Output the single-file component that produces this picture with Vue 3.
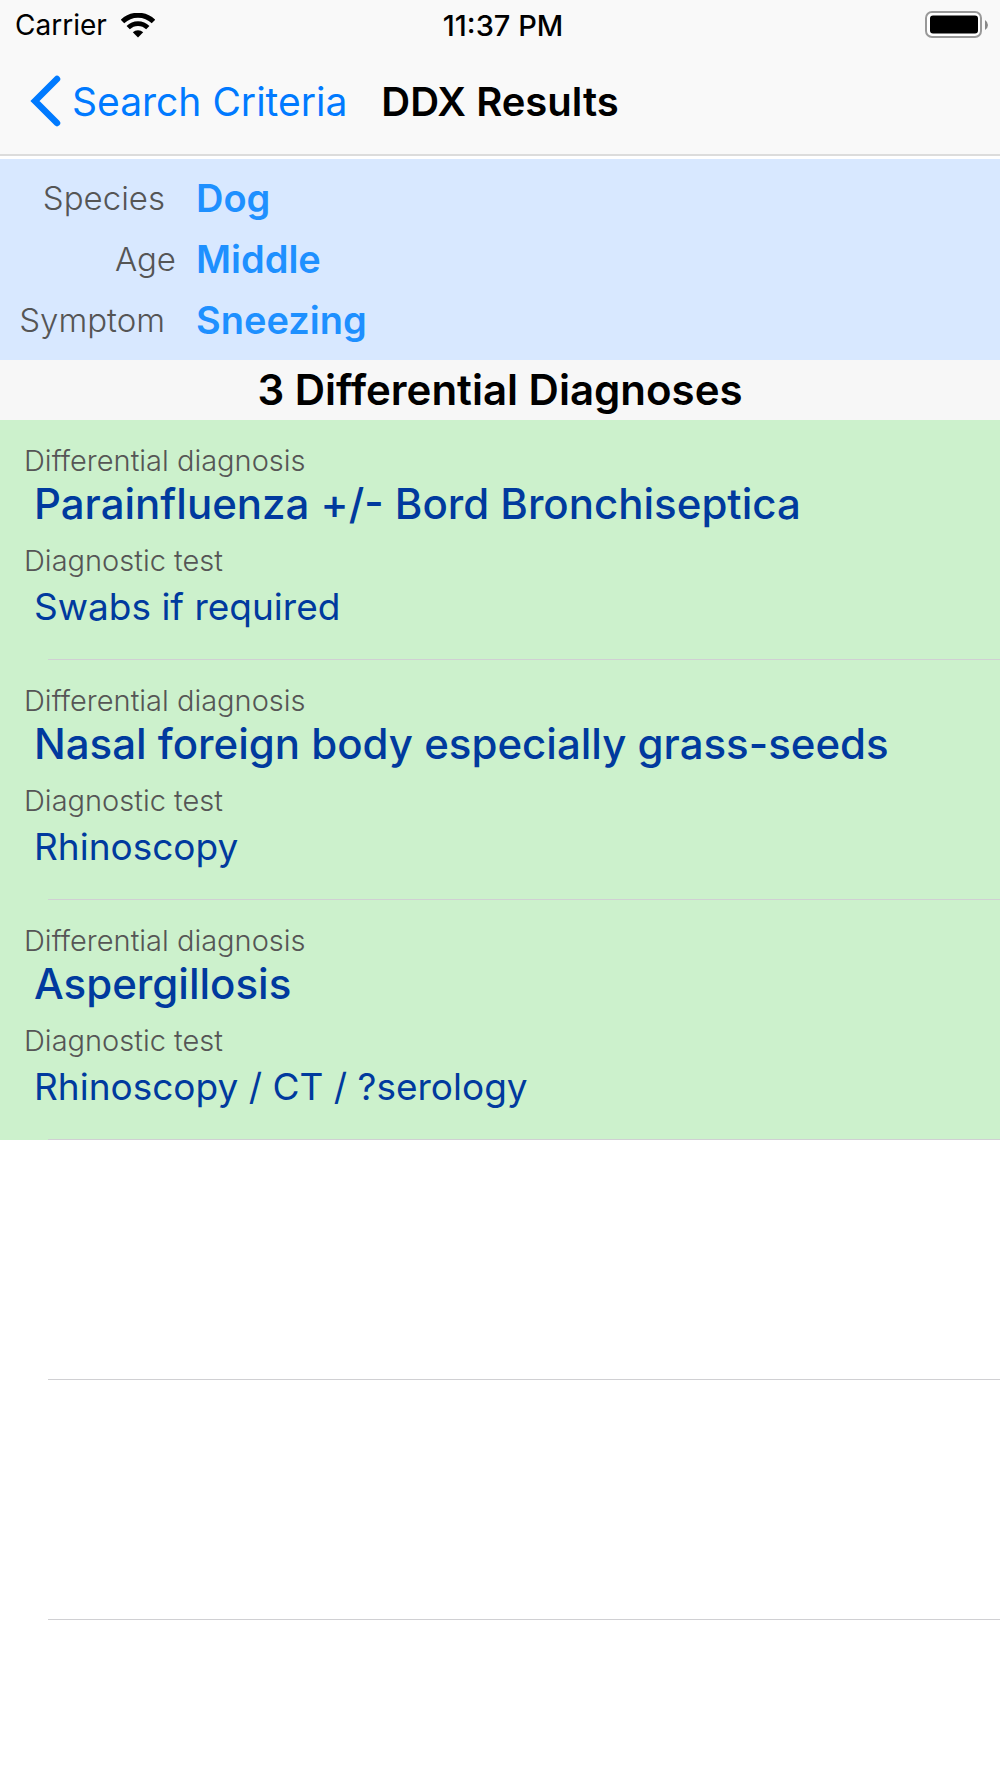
<script setup>
const criteria = [
  { label: 'Species', value: 'Dog' },
  { label: 'Age', value: 'Middle', wide: true },
  { label: 'Symptom', value: 'Sneezing' },
]

const results = [
  { diagnosis: 'Parainfluenza +/- Bord Bronchiseptica', test: 'Swabs if required' },
  { diagnosis: 'Nasal foreign body especially grass-seeds', test: 'Rhinoscopy' },
  { diagnosis: 'Aspergillosis', test: 'Rhinoscopy / CT / ?serology' },
]

const emptyRows = 2
</script>

<template>
  <div class="screen">
    <header class="top">
      <div class="status">
        <div class="carrier">
          <span>Carrier</span>
          <svg class="wifi" width="34" height="25" viewBox="0 0 34 25" aria-label="Wi-Fi">
            <g fill="none" stroke="#000">
              <path d="M1.5 8.6 A22 22 0 0 1 32.500 8.600" stroke-width="5" />
              <path d="M7.200 14.700 A13.800 13.800 0 0 1 26.800 14.700" stroke-width="4.600" />
            </g>
            <path d="M17 24.500 L11.800 19.200 A7.600 7.600 0 0 1 22.200 19.200 Z" />
          </svg>
        </div>
        <time class="clock">11:37 PM</time>
        <svg class="battery" width="64" height="28" viewBox="0 0 64 28" aria-label="Battery full">
          <rect x="1" y="1" width="55" height="25" rx="6" fill="#fff" stroke="#999" stroke-width="2" />
          <rect x="5" y="4.500" width="48" height="18" rx="3" />
          <path d="M60 9 Q63 11 63 14 T60 19 Z" fill="#888" />
        </svg>
      </div>
      <nav class="nav">
        <a class="back" href="#">
          <svg width="32" height="52" viewBox="0 0 32 52" aria-hidden="true">
            <path d="M27 4 L5 26 L27 48" fill="none" stroke="#007aff" stroke-width="6.500" stroke-linecap="round" />
          </svg>
          <span>Search Criteria</span>
        </a>
        <h1 class="title">DDX Results</h1>
      </nav>
    </header>

    <dl class="criteria">
      <div v-for="item in criteria" :key="item.label" class="criterion">
        <dt :class="{ wide: item.wide }">{{ item.label }}</dt>
        <dd>{{ item.value }}</dd>
      </div>
    </dl>

    <h2 class="count">{{ results.length }} Differential Diagnoses</h2>

    <ul class="list">
      <li v-for="item in results" :key="item.diagnosis" class="row result">
        <p class="label">Differential diagnosis</p>
        <p class="diagnosis">{{ item.diagnosis }}</p>
        <p class="label second">Diagnostic test</p>
        <p class="test">{{ item.test }}</p>
      </li>
      <li v-for="n in emptyRows" :key="n" class="row" aria-hidden="true"></li>
    </ul>
  </div>
</template>

<style>
body {
  margin: 0;
  background: #fff;
}
</style>

<style scoped>
.screen {
  font-family: Inter, "Liberation Sans", sans-serif;
  color: #000;
}

h1, h2, p, ul, dl, dd {
  margin: 0;
  padding: 0;
}

.top {
  background: #f9f9f9;
  border-bottom: 2px solid #dcdcdc;
}

.status {
  display: grid;
  grid-template-columns: 1fr auto 1fr;
  align-items: center;
  height: 50px;
  padding: 0 11px 0 15px;
  font-size: 28px;
}

.carrier {
  display: flex;
  align-items: center;
  gap: 14px;
}

.clock {
  padding-left: 2px;
  font-size: 29px;
  font-weight: 500;
}

.battery {
  justify-self: end;
}

.nav {
  display: grid;
  grid-template-columns: 1fr auto 1fr;
  align-items: center;
  height: 102px;
  padding-bottom: 2px;
  font-size: 39px;
}

.back {
  display: flex;
  align-items: center;
  gap: 10px;
  padding-left: 30px;
  color: #007aff;
  text-decoration: none;
  white-space: nowrap;
}

.title {
  font-size: 40px;
  font-weight: 600;
}

.criteria {
  margin-top: 3px;
  padding: 9px 0;
  background: #d8e8ff;
}

.criterion {
  display: grid;
  grid-template-columns: 176px 1fr;
  column-gap: 20px;
  align-items: center;
  line-height: 61px;
}

.criterion dt {
  padding-right: 11px;
  font-size: 33px;
  font-weight: 300;
  color: #555;
  text-align: right;
}

.criterion dt.wide {
  padding-right: 0;
}

.criterion dd {
  font-size: 38px;
  font-weight: 600;
  color: #1e90ff;
}

.count {
  background: #f7f7f7;
  font-size: 42px;
  font-weight: 600;
  line-height: 60px;
  text-align: center;
}

.list {
  list-style: none;
}

.row {
  display: flex;
  flex-direction: column;
  box-sizing: border-box;
  min-height: 240px;
}

.row::after {
  content: "";
  height: 1px;
  margin: auto 0 0 48px;
  background: #d0d0d3;
}

.result {
  padding-top: 23px;
  background: #ccf1cc;
}

.label {
  padding-left: 24px;
  font-size: 29px;
  font-weight: 300;
  line-height: 36px;
  color: #555;
}

.second {
  margin-top: 14px;
}

.diagnosis {
  padding-left: 34px;
  font-size: 42px;
  font-weight: 500;
  line-height: 50px;
  color: #003a9e;
}

.test {
  padding-left: 34px;
  font-size: 37px;
  line-height: 56px;
  color: #003a9e;
}
</style>
